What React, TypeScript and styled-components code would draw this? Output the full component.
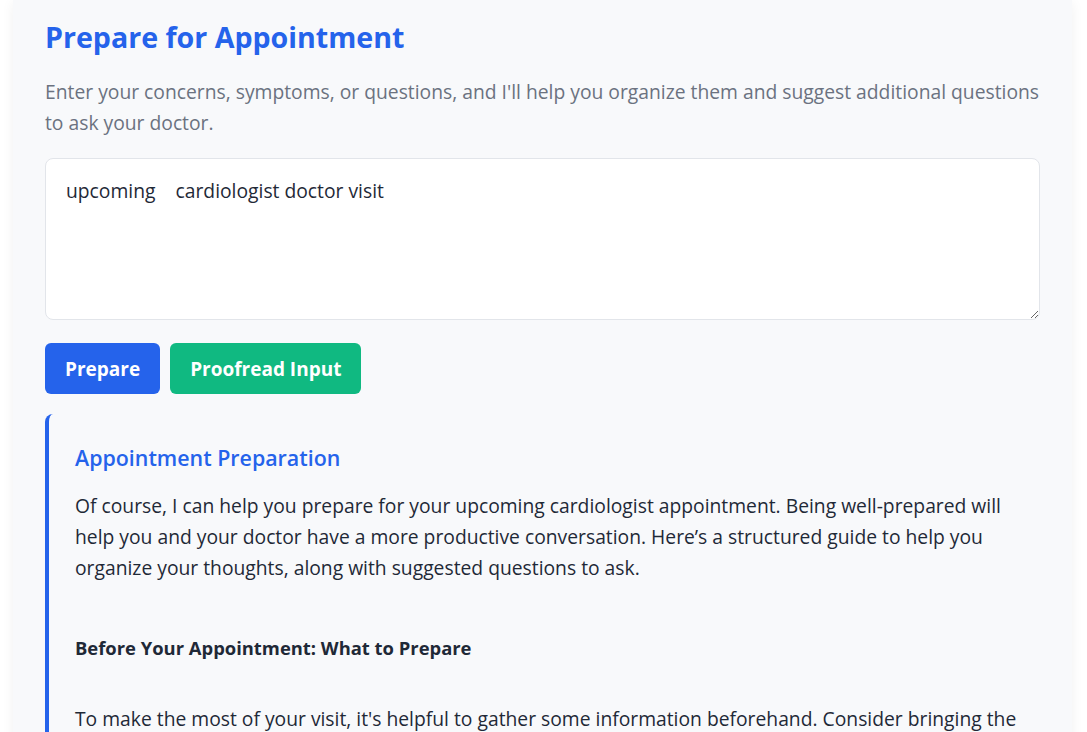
import React, { useState } from 'react';
import styled, { createGlobalStyle } from 'styled-components';

const GlobalStyle = createGlobalStyle`
	html, body {
		margin: 0;
		padding: 0;
		background: #ffffff;
		overflow: hidden;
	}
	body {
		font-family: 'Segoe UI', 'Open Sans', 'Noto Sans', sans-serif;
		color: #1f2937;
	}
`;

const Page = styled.div`
	padding: 0 15px 0 13px;
	height: 732px;
	overflow: hidden;
`;

const Card = styled.div`
	background: #f8f9fb;
	box-shadow: 0 2px 12px rgba(0, 0, 0, 0.06);
	padding: 16px 32px 40px;
	min-height: 900px;
`;

const Title = styled.h1`
	margin: 0;
	font-size: 28.6px;
	font-weight: 700;
	line-height: 42px;
	color: #2563eb;
`;

const Intro = styled.p`
	margin: 18px 0 20px;
	font-size: 19.3px;
	line-height: 31px;
	color: #6b7280;
`;

const Input = styled.textarea`
	display: block;
	box-sizing: border-box;
	width: 100%;
	height: 162px;
	padding: 16px 20px;
	border: 1px solid #e2e5ea;
	border-radius: 8px;
	background: #ffffff;
	font-family: inherit;
	font-size: 19.3px;
	line-height: 31px;
	color: #1f2937;
	resize: vertical;
	outline: none;
`;

const Actions = styled.div`
	display: flex;
	gap: 10px;
	margin-top: 23px;
`;

const Button = styled.button<{ $tone: 'blue' | 'green' }>`
	height: 51px;
	padding: 0 20px;
	border: none;
	border-radius: 6px;
	background: ${(p) => (p.$tone === 'blue' ? '#2563eb' : '#10b981')};
	color: #ffffff;
	font-family: inherit;
	font-size: 19px;
	font-weight: 700;
	cursor: pointer;
`;

// result panel: only the left accent bar is drawn, the rest blends into the card
const Result = styled.section`
	margin-top: 20px;
	border-left: 4px solid #2563eb;
	border-radius: 8px;
	padding: 28px 20px 20px 26px;
`;

const ResultTitle = styled.h2`
	margin: 0 0 16px;
	font-size: 21.4px;
	font-weight: 600;
	line-height: 32px;
	color: #2563eb;
`;

const Para = styled.p`
	margin: 0;
	font-size: 19.3px;
	line-height: 31px;
	color: #1f2937;
`;

const Subhead = styled.p`
	margin: 49px 0 0;
	font-size: 18.4px;
	line-height: 31px;
	font-weight: 700;
	color: #1f2937;
`;

const Spaced = styled(Para)`
	margin-top: 40px;
`;

const App: React.FC = () => {
	const [text, setText] = useState<string>('upcoming    cardiologist doctor visit');

	return (
		<>
			<GlobalStyle />
			<Page>
				<Card>
					<Title>Prepare for Appointment</Title>
					<Intro>
						Enter your concerns, symptoms, or questions, and I'll help you organize them and suggest
						additional questions to ask your doctor.
					</Intro>
					<Input value={text} onChange={(e) => setText(e.target.value)} />
					<Actions>
						<Button $tone="blue">Prepare</Button>
						<Button $tone="green">Proofread Input</Button>
					</Actions>
					<Result>
						<ResultTitle>Appointment Preparation</ResultTitle>
						<Para>
							Of course, I can help you prepare for your upcoming cardiologist appointment. Being
							well-prepared will help you and your doctor have a more productive conversation.
							Here’s a structured guide to help you organize your thoughts, along with suggested
							questions to ask.
						</Para>
						<Subhead>Before Your Appointment: What to Prepare</Subhead>
						<Spaced>
							To make the most of your visit, it's helpful to gather some information beforehand.
							Consider bringing the following items with you to your appointment.
						</Spaced>
					</Result>
				</Card>
			</Page>
		</>
	);
};

export default App;
